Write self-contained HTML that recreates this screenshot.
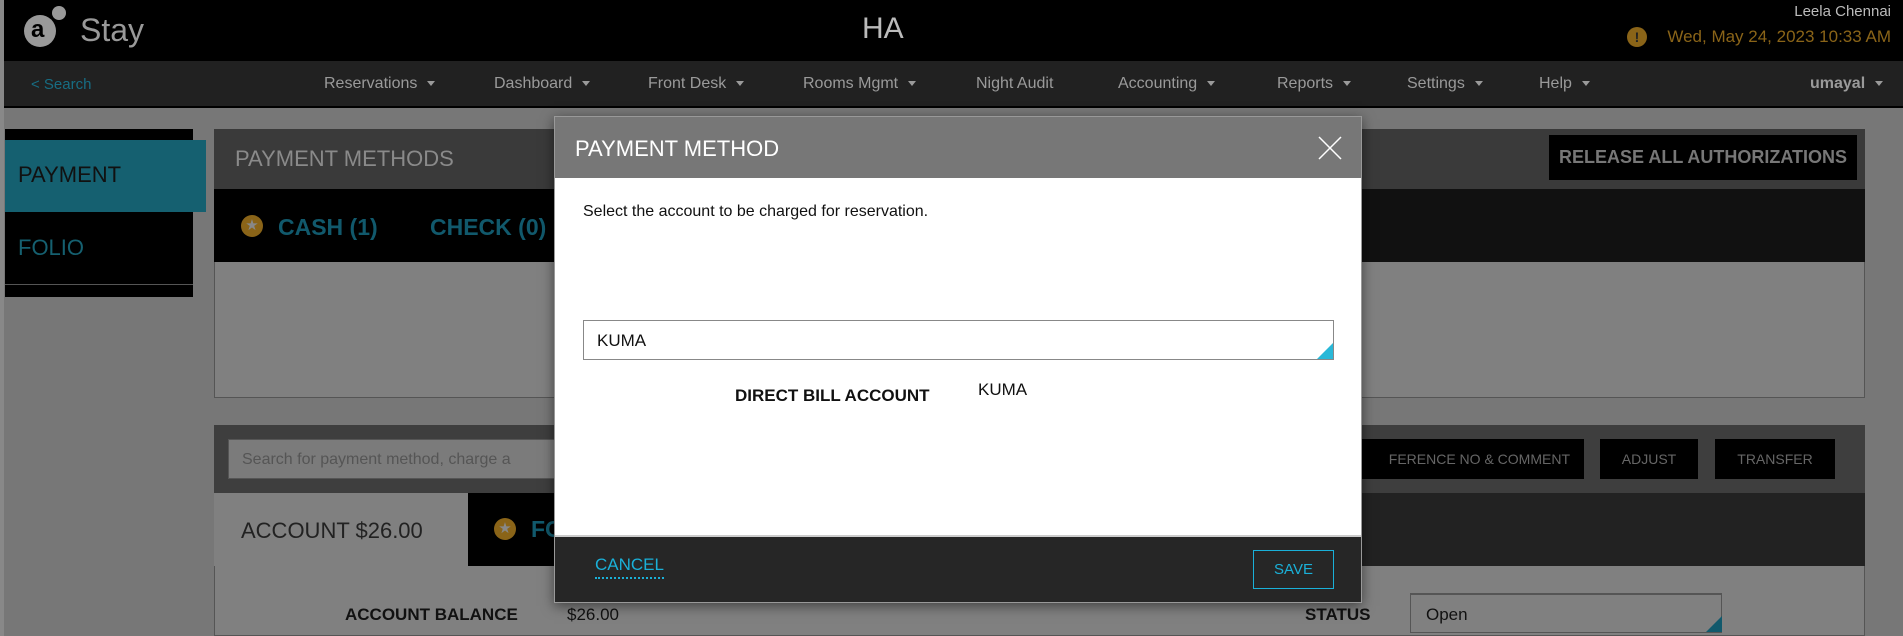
<!DOCTYPE html>
<html><head><meta charset="utf-8"><style>
*{margin:0;padding:0;box-sizing:border-box}
body{width:1903px;height:636px;overflow:hidden;background:#777;font-family:"Liberation Sans",Arial,sans-serif;position:relative}
.a{position:absolute;white-space:nowrap}
.nav{color:#9a9a9a;font-size:16px;top:75px}
.car{display:inline-block;width:0;height:0;border-left:4px solid transparent;border-right:4px solid transparent;border-top:5px solid #9a9a9a;margin-left:10px;vertical-align:middle}
</style></head><body>
<div class="a" style="left:0;top:0;width:1903px;height:61px;background:#000"></div>
<div class="a" style="left:0;top:0;width:4px;height:636px;background:#888"></div>
<div class="a" style="left:24px;top:15px;width:32px;height:32px;border-radius:50%;background:#999"></div>
<div class="a" style="left:31px;top:16px;font-size:24px;color:#000;font-weight:bold">a</div>
<div class="a" style="left:52px;top:6px;width:14px;height:14px;border-radius:50%;background:#999"></div>
<div class="a" style="left:80px;top:12px;font-size:32px;color:#999">Stay</div>
<div class="a" style="left:862px;top:12px;font-size:30px;color:#bbb">HA</div>
<div class="a" style="right:12px;top:3px;font-size:15px;color:#bbb">Leela Chennai</div>
<div class="a" style="left:1627px;top:27px;width:20px;height:20px;border-radius:50%;background:#8a6418;color:#222;font-size:14px;font-weight:bold;text-align:center;line-height:20px">!</div>
<div class="a" style="right:12px;top:27px;font-size:17px;color:#8a6418">Wed, May 24, 2023 10:33 AM</div>
<div class="a" style="left:4px;top:61px;width:1899px;height:47px;background:#212121;border-bottom:2px solid #000"></div>
<div class="a nav" style="left:31px;color:#176d83;font-size:15px;top:76px">&lt; Search</div>
<div class="a nav" style="left:324px">Reservations<span class="car"></span></div>
<div class="a nav" style="left:494px">Dashboard<span class="car"></span></div>
<div class="a nav" style="left:648px">Front Desk<span class="car"></span></div>
<div class="a nav" style="left:803px">Rooms Mgmt<span class="car"></span></div>
<div class="a nav" style="left:976px">Night Audit</div>
<div class="a nav" style="left:1118px">Accounting<span class="car"></span></div>
<div class="a nav" style="left:1277px">Reports<span class="car"></span></div>
<div class="a nav" style="left:1407px">Settings<span class="car"></span></div>
<div class="a nav" style="left:1539px">Help<span class="car"></span></div>
<div class="a nav" style="left:1810px;font-weight:bold">umayal<span class="car"></span></div>
<div class="a" style="left:5px;top:129px;width:188px;height:168px;background:#000"></div>
<div class="a" style="left:5px;top:140px;width:201px;height:72px;background:#156070"></div>
<div class="a" style="left:18px;top:162px;font-size:22px;color:#111">PAYMENT</div>
<div class="a" style="left:18px;top:235px;font-size:22px;color:#156070">FOLIO</div>
<div class="a" style="left:5px;top:284px;width:188px;height:1px;background:#555"></div>
<div class="a" style="left:214px;top:129px;width:1651px;height:269px;background:#808080;border:1px solid #555"></div>
<div class="a" style="left:214px;top:129px;width:1651px;height:60px;background:#3a3a3a"></div>
<div class="a" style="left:235px;top:146px;font-size:22px;color:#8a8a8a">PAYMENT METHODS</div>
<div class="a" style="left:1549px;top:135px;width:308px;height:45px;background:#000;color:#777;font-size:18px;font-weight:bold;text-align:center;line-height:45px">RELEASE ALL AUTHORIZATIONS</div>
<div class="a" style="left:214px;top:189px;width:1651px;height:73px;background:#111"></div>
<div class="a" style="left:214px;top:189px;width:400px;height:73px;background:#000"></div>
<div class="a" style="left:241px;top:215px;width:22px;height:22px;border-radius:50%;background:#8a6418;color:#888;font-size:15px;text-align:center;line-height:22px">★</div>
<div class="a" style="left:278px;top:214px;font-size:23px;font-weight:bold;color:#11596c">CASH (1)</div>
<div class="a" style="left:430px;top:214px;font-size:23px;font-weight:bold;color:#11596c">CHECK (0)</div>
<div class="a" style="left:214px;top:425px;width:1651px;height:211px;background:#808080;border:1px solid #555"></div>
<div class="a" style="left:214px;top:425px;width:1651px;height:68px;background:#3e3e3e"></div>
<div class="a" style="left:228px;top:439px;width:360px;height:40px;background:#7b7b7b;border:1px solid #555"></div>
<div class="a" style="left:242px;top:451px;font-size:16px;color:#555">Search for payment method, charge a</div>
<div class="a" style="left:1340px;top:439px;width:244px;height:40px;background:#000;color:#666;font-size:14px;line-height:40px;text-align:right;padding-right:14px">FERENCE NO &amp; COMMENT</div>
<div class="a" style="left:1600px;top:439px;width:98px;height:40px;background:#000;color:#666;font-size:14px;line-height:40px;text-align:center">ADJUST</div>
<div class="a" style="left:1715px;top:439px;width:120px;height:40px;background:#000;color:#666;font-size:14px;line-height:40px;text-align:center">TRANSFER</div>
<div class="a" style="left:214px;top:493px;width:1651px;height:73px;background:#222"></div>
<div class="a" style="left:214px;top:493px;width:254px;height:73px;background:#808080"></div>
<div class="a" style="left:468px;top:493px;width:100px;height:73px;background:#000"></div>
<div class="a" style="left:241px;top:518px;font-size:22px;color:#222">ACCOUNT $26.00</div>
<div class="a" style="left:494px;top:518px;width:22px;height:22px;border-radius:50%;background:#8a6418;color:#888;font-size:15px;text-align:center;line-height:22px">★</div>
<div class="a" style="left:531px;top:516px;font-size:23px;font-weight:bold;color:#11596c">FO</div>
<div class="a" style="left:345px;top:605px;font-size:17px;font-weight:bold;color:#111">ACCOUNT BALANCE</div>
<div class="a" style="left:567px;top:605px;font-size:17px;color:#111">$26.00</div>
<div class="a" style="left:1305px;top:605px;font-size:17px;font-weight:bold;color:#111">STATUS</div>
<div class="a" style="left:1410px;top:593px;width:312px;height:40px;border:1px solid #555;border-top:2px solid #555"></div>
<div class="a" style="left:1426px;top:605px;font-size:17px;color:#111">Open</div>
<div class="a" style="left:1706px;top:616px;width:0;height:0;border-left:16px solid transparent;border-bottom:16px solid #11596c"></div>
<div class="a" style="left:554px;top:116px;width:808px;height:487px;background:#fff;box-shadow:0 3px 12px rgba(0,0,0,.5);border:1px solid #999"></div>
<div class="a" style="left:555px;top:117px;width:806px;height:61px;background:#777"></div>
<div class="a" style="left:575px;top:136px;font-size:22px;color:#fff">PAYMENT METHOD</div>
<svg class="a" style="left:1318px;top:136px" width="24" height="24"><path d="M1 1L23 23M23 1L1 23" stroke="#fff" stroke-width="1.5"/></svg>
<div class="a" style="left:583px;top:203px;font-size:16px;color:#111">Select the account to be charged for reservation.</div>
<div class="a" style="left:583px;top:320px;width:751px;height:40px;border:1px solid #888"></div>
<div class="a" style="left:597px;top:331px;font-size:17px;color:#111">KUMA</div>
<div class="a" style="left:1317px;top:343px;width:0;height:0;border-left:16px solid transparent;border-bottom:16px solid #29b8d8"></div>
<div class="a" style="left:735px;top:386px;font-size:17px;font-weight:bold;color:#111">DIRECT BILL ACCOUNT</div>
<div class="a" style="left:978px;top:380px;font-size:17px;color:#111">KUMA</div>
<div class="a" style="left:555px;top:535px;width:806px;height:67px;background:#262626;border-top:2px solid #ccc"></div>
<div class="a" style="left:595px;top:555px;font-size:17px;color:#1ab0d8;border-bottom:2px dotted #1ab0d8;padding-bottom:2px">CANCEL</div>
<div class="a" style="left:1253px;top:550px;width:81px;height:39px;border:1px solid #1ab0d8;color:#1ab0d8;font-size:15px;text-align:center;line-height:37px">SAVE</div>
</body></html>
